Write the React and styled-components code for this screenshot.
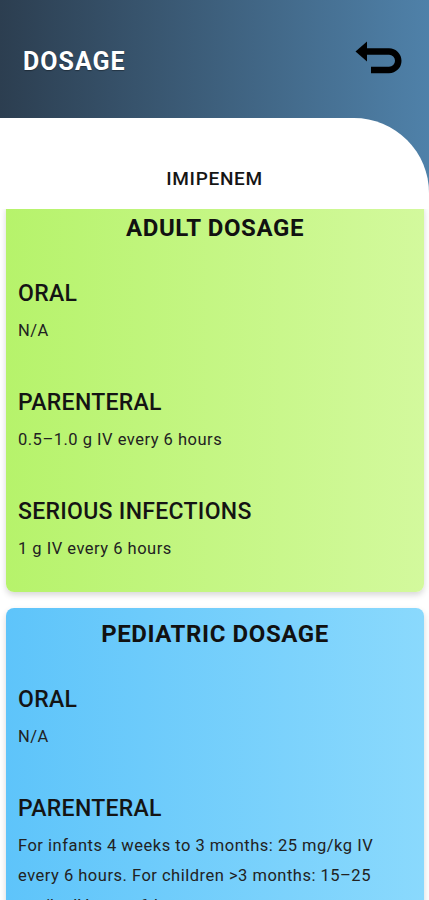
import styled, { createGlobalStyle } from "styled-components";

const GlobalStyle = createGlobalStyle`
  html, body {
    margin: 0;
    padding: 0;
  }
  body {
    font-family: Roboto, "Liberation Sans", sans-serif;
    overflow: hidden;
  }
  * {
    box-sizing: border-box;
  }
`;

const Page = styled.div`
  height: 100vh;
  display: flex;
  flex-direction: column;
  background: linear-gradient(to right, #2c3e50, #4f81a9);
`;

const Header = styled.header`
  height: 118px;
  flex-shrink: 0;
  display: flex;
  align-items: center;
  justify-content: space-between;
  padding: 4px 27px 0 23px;
`;

const HeaderTitle = styled.h1`
  margin: 0;
  color: #ffffff;
  font-size: 25px;
  font-weight: 700;
  letter-spacing: 1px;
  text-shadow: 0 1px 1px rgba(0, 0, 0, 0.35);
`;

const BackButton = styled.button`
  border: none;
  background: none;
  padding: 0;
  margin-top: -6px;
  display: flex;
  cursor: pointer;
`;

const Body = styled.main`
  flex: 1;
  min-height: 0;
  display: flex;
  flex-direction: column;
  background: #ffffff;
  border-top-right-radius: 75px;
`;

const DrugName = styled.h2`
  margin: 0;
  padding: 50px 0 19px;
  text-align: center;
  font-size: 19px;
  line-height: 22px;
  font-weight: 500;
  letter-spacing: 0.7px;
  color: #151515;
`;

const ScrollArea = styled.div`
  flex: 1;
  min-height: 0;
  overflow: hidden;
`;

/* scroll position of the list: first card is pushed up a little */
const CardList = styled.div`
  display: flex;
  flex-direction: column;
  gap: 16px;
  padding: 0 5px 20px 6px;
  margin-top: -7px;
`;

const Card = styled.section`
  border-radius: 8px;
  padding: 11px 12px 28px;
  background: ${(p) =>
    p.$tone === "green"
      ? "linear-gradient(to right, #b6f36b, #d3f99d)"
      : "linear-gradient(to right, #5ec4fa, #8ad9fd)"};
  box-shadow: 0 3px 6px rgba(0, 0, 0, 0.16);
`;

const CardTitle = styled.h3`
  margin: 0 0 37px;
  text-align: center;
  font-size: 24px;
  line-height: 30px;
  font-weight: 700;
  letter-spacing: 0.6px;
  color: #111111;
`;

const Sections = styled.div`
  display: flex;
  flex-direction: column;
  gap: 43px;
`;

const Section = styled.div`
  display: flex;
  flex-direction: column;
  gap: 8px;
`;

const Label = styled.h4`
  margin: 0;
  font-size: 23px;
  line-height: 28px;
  font-weight: 500;
  letter-spacing: 0.3px;
  color: #141414;
`;

const Text = styled.p`
  margin: 0;
  font-size: 16.5px;
  line-height: 30px;
  letter-spacing: 0.5px;
  color: #222222;
`;

const BackIcon = () => (
  <svg width="48" height="36" viewBox="0 0 48 36">
    <path d="M1.5 11.5 L13 1.5 L13 21.5 Z" fill="#000" />
    <path
      d="M11 11.5 H35 A9.25 9.25 0 0 1 35 30 H17"
      fill="none"
      stroke="#000"
      strokeWidth="6.5"
    />
  </svg>
);

const cards = [
  {
    tone: "green",
    title: "ADULT DOSAGE",
    items: [
      { label: "ORAL", text: "N/A" },
      { label: "PARENTERAL", text: "0.5–1.0 g IV every 6 hours" },
      { label: "SERIOUS INFECTIONS", text: "1 g IV every 6 hours" },
    ],
  },
  {
    tone: "blue",
    title: "PEDIATRIC DOSAGE",
    items: [
      { label: "ORAL", text: "N/A" },
      {
        label: "PARENTERAL",
        text: "For infants 4 weeks to 3 months: 25 mg/kg IV every 6 hours. For children >3 months: 15–25 mg/kg IV every 6 hours.",
      },
    ],
  },
];

export default function App() {
  return (
    <>
      <GlobalStyle />
      <Page>
        <Header>
          <HeaderTitle>DOSAGE</HeaderTitle>
          <BackButton aria-label="Back">
            <BackIcon />
          </BackButton>
        </Header>
        <Body>
          <DrugName>IMIPENEM</DrugName>
          <ScrollArea>
            <CardList>
              {cards.map((card) => (
                <Card key={card.title} $tone={card.tone}>
                  <CardTitle>{card.title}</CardTitle>
                  <Sections>
                    {card.items.map((item) => (
                      <Section key={item.label}>
                        <Label>{item.label}</Label>
                        <Text>{item.text}</Text>
                      </Section>
                    ))}
                  </Sections>
                </Card>
              ))}
            </CardList>
          </ScrollArea>
        </Body>
      </Page>
    </>
  );
}
